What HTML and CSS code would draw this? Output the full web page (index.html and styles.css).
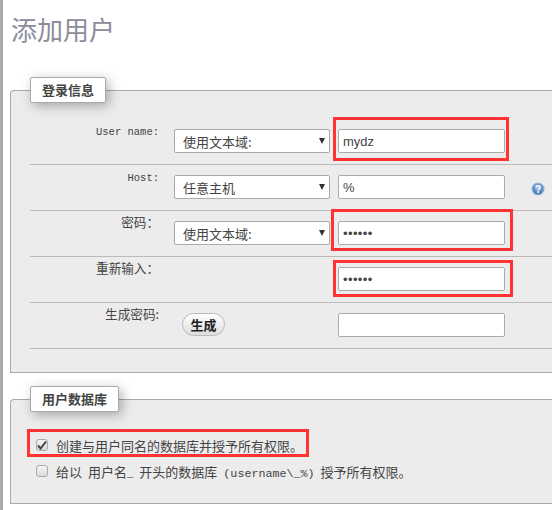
FILE: index.html
```html
<!DOCTYPE html>
<html lang="zh-CN">
<head>
  <meta charset="UTF-8" />
  <meta name="viewport" content="width=device-width, initial-scale=1.0"/>
  <title>添加用户</title>
  <link rel="stylesheet" href="styles.css">
</head>
<body>

  <h2>添加用户</h2>

  <fieldset class="login">
    <legend>登录信息</legend>

    <div class="row">
      <label class="name"><span class="en">User name:</span></label>
      <div class="pick">
        <select><option>使用文本域:</option></select>
      </div>
      <input type="text" value="mydz">
    </div>

    <div class="row">
      <label class="name"><span class="en">Host:</span></label>
      <div class="pick">
        <select><option>任意主机</option></select>
      </div>
      <input type="text" value="%">
      <svg class="help" width="14" height="14" viewBox="0 0 14 14">
        <defs>
          <radialGradient id="help-fill" cx="50%" cy="40%" r="60%">
            <stop offset="0" stop-color="#a9c6e8"/>
            <stop offset="1" stop-color="#3f74b5"/>
          </radialGradient>
        </defs>
        <circle cx="7" cy="7" r="6.5" fill="#8fb0d8"/>
        <circle cx="7" cy="7" r="5.2" fill="url(#help-fill)"/>
        <path d="M5 5.6C5 4.4 5.9 3.7 7 3.7s2.1.7 2.1 1.8c0 1.5-1.9 1.4-1.9 2.8" fill="none" stroke="#fff" stroke-width="1.5"/>
        <rect x="6.3" y="9.2" width="1.7" height="1.6" fill="#fff"/>
      </svg>
    </div>

    <div class="row">
      <label class="name">密码：</label>
      <div class="pick">
        <select><option>使用文本域:</option></select>
      </div>
      <input type="password" value="123456">
    </div>

    <div class="row">
      <label class="name">重新输入：</label>
      <div></div>
      <input type="password" value="123456">
    </div>

    <div class="row">
      <label class="name">生成密码:</label>
      <div><button type="button">生成</button></div>
      <input type="text">
    </div>
  </fieldset>

  <fieldset class="db">
    <legend>用户数据库</legend>

    <div class="check-row">
      <span class="box">
        <svg width="10" height="10" viewBox="0 0 10 10"><path d="M1 5.5 3.6 8.5 9 1.5" fill="none" stroke="#444" stroke-width="2"/></svg>
      </span>
      <span>创建与用户同名的数据库并授予所有权限<span class="stop">。</span></span>
    </div>
    <div class="check-row">
      <span class="box"></span>
      <span>给以<span class="gap"></span>用户名<span class="en">_</span><span class="gap"></span>开头的数据库<span class="gap"></span><span class="en wide">(username\_%)</span><span class="gap"></span>授予所有权限<span class="stop">。</span></span>
    </div>
  </fieldset>

  <!-- 红框标注 -->
  <div class="mark mark-user"></div>
  <div class="mark mark-pass"></div>
  <div class="mark mark-again"></div>
  <div class="mark mark-db"></div>

</body>
</html>
```

FILE: styles.css
```css
html, body {
  margin: 0;
  height: 100%;
  overflow: hidden;
}

body {
  position: relative;
  box-sizing: border-box;
  border-left: 3px solid #aaa;
  padding-left: 7px;
  background: #fff;
  color: #444;
  font-family: "Noto Sans CJK SC", sans-serif;
  font-size: 13px;
}

h2 {
  margin: 0;
  padding: 11px 0 0 1px;
  height: 66px;
  box-sizing: border-box;
  font-size: 26px;
  line-height: 36px;
  font-weight: normal;
  color: #8a8c9c;
}

fieldset {
  margin: 0;
  padding: 16px 0 0 19px;
  box-sizing: border-box;
  background: #ececec;
  border: 1px solid #aaa;
  border-right: none;
  border-radius: 4px 0 0 0;
}

fieldset.login {
  height: 296px;
  margin-top: 11px;
  margin-bottom: 13px;
}

fieldset.db {
  height: 118px;
  padding-top: 20px;
}

legend {
  padding: 0 11px;
  height: 26px;
  box-sizing: border-box;
  line-height: 24px;
  background: #fff;
  border: 1px solid #aaa;
  border-radius: 2px;
  box-shadow: 3px 3px 12px rgba(0, 0, 0, 0.3);
  font-size: 13px;
  font-weight: bold;
  color: #444;
}

.row {
  display: grid;
  grid-template-columns: 129px 171px auto auto;
  height: 46px;
  box-sizing: border-box;
  padding-top: 4px;
  border-bottom: 1px solid #bbb;
}

.name {
  text-align: right;
  font-size: 12.6px;
  line-height: 14px;
}

.en {
  font-family: "Liberation Mono", monospace;
  font-size: 10.5px;
}

.en.wide {
  font-size: 11.7px;
}

.gap {
  display: inline-block;
  width: 6px;
}

.stop {
  font-family: "Noto Sans CJK TC", sans-serif;
}

.pick {
  position: relative;
  margin: 6px 0 0 15px;
  width: 156px;
  height: 24px;
}

.pick::after {
  content: "";
  position: absolute;
  top: 9px;
  right: 5px;
  border-top: 6px solid #333;
  border-left: 3.5px solid transparent;
  border-right: 3.5px solid transparent;
  pointer-events: none;
}

select, input[type="text"], input[type="password"] {
  box-sizing: border-box;
  height: 24px;
  background: #fff;
  border: 1px solid #aaa;
  border-radius: 2px;
  color: #444;
  font-size: 13px;
  font-family: "Noto Sans CJK SC", sans-serif;
}

select {
  display: block;
  appearance: none;
  width: 100%;
  padding: 0 0 0 8px;
}

input[type="text"], input[type="password"] {
  margin: 6px 0 0 8px;
  width: 167px;
  padding: 0 4px;
  font-family: "Liberation Sans", sans-serif;
}

input[type="password"] {
  letter-spacing: 0.4px;
}

button {
  display: block;
  margin: 6px 0 0 23px;
  padding: 0;
  width: 43px;
  height: 23px;
  background: linear-gradient(#fff, #ddd);
  border: 1px solid #bbb;
  border-radius: 12px;
  color: #222;
  font-family: "Noto Sans CJK SC", sans-serif;
  font-size: 13px;
  font-weight: bold;
}

.help {
  margin: 13px 0 0 18px;
}

.check-row {
  display: flex;
  align-items: center;
  gap: 8px;
  height: 26px;
  padding-left: 6px;
}

.box {
  display: flex;
  align-items: center;
  justify-content: center;
  box-sizing: border-box;
  width: 12px;
  height: 12px;
  background: linear-gradient(#f4f4f4, #dcdcdc);
  border: 1px solid #aaa;
  border-radius: 3px;
}

.mark {
  position: absolute;
  box-sizing: border-box;
  border: 3px solid #f33;
}

.mark-user {
  left: 330px;
  top: 117px;
  width: 176px;
  height: 44px;
}

.mark-pass {
  left: 328px;
  top: 209px;
  width: 182px;
  height: 42px;
}

.mark-again {
  left: 330px;
  top: 260px;
  width: 180px;
  height: 37px;
}

.mark-db {
  left: 24px;
  top: 429px;
  width: 282px;
  height: 28px;
}
```
